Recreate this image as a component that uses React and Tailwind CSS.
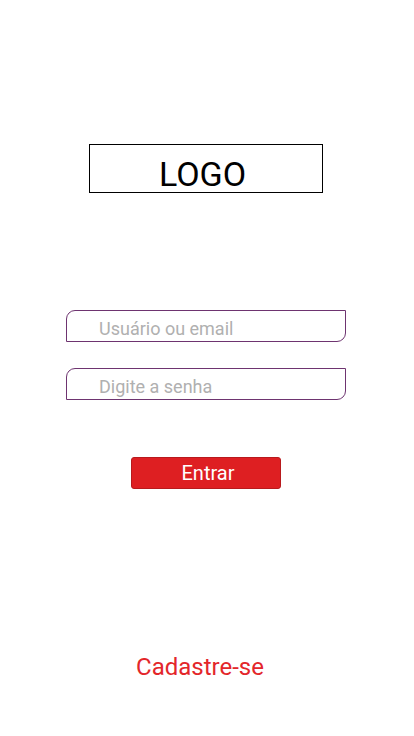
import React, { useState } from 'react';

const App = () => {
    const [usuario, setUsuario] = useState('');
    const [senha, setSenha] = useState('');

    return (
        <div className="flex min-h-[736px] w-full flex-col items-center bg-white font-['Roboto',sans-serif]">
            {/* Logo */}
            <div className="mt-[144px] ml-[-3px] flex h-[49px] w-[234px] items-end justify-center border border-black">
                <span className="mr-[6px] mb-[-2px] text-[34px] leading-[40px] text-black">LOGO</span>
            </div>

            {/* Formulario */}
            <div className="mt-[117px] ml-[-2px] flex flex-col gap-[26px]">
                <input
                    type="text"
                    value={usuario}
                    onChange={(e) => setUsuario(e.target.value)}
                    placeholder="Usuário ou email"
                    className="h-[32px] w-[280px] rounded-tl-[9px] rounded-br-[9px] border-[1.5px] border-[#6e3470] pl-[32px] pt-[5px] text-[18px] text-gray-700 outline-none placeholder:text-[#b0b0b0]"
                />
                <input
                    type="password"
                    value={senha}
                    onChange={(e) => setSenha(e.target.value)}
                    placeholder="Digite a senha"
                    className="h-[32px] w-[280px] rounded-tl-[9px] rounded-br-[9px] border-[1.5px] border-[#6e3470] pl-[32px] pt-[5px] text-[18px] text-gray-700 outline-none placeholder:text-[#b0b0b0]"
                />
            </div>

            <button className="mt-[57px] ml-[-3px] h-[32px] w-[150px] rounded-[3px] border border-[#b81a1d] bg-[#de1f22] pl-[5px] text-[20px] leading-[28px] text-white">
                Entrar
            </button>

            <a href="#" className="mt-[160px] ml-[-14px] text-[24px] text-[#e3262a]">
                Cadastre-se
            </a>
        </div>
    );
};

export default App;
